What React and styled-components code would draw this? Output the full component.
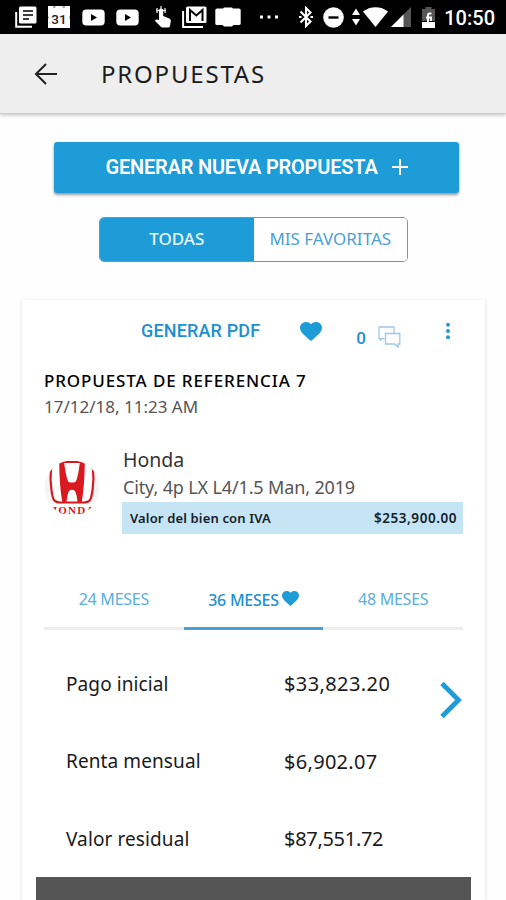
import React from "react";
import styled, { createGlobalStyle } from "styled-components";

const rows = [
  { label: "Pago inicial", value: "$33,823.20", spacing: "0.4px" },
  { label: "Renta mensual", value: "$6,902.07", spacing: "0.3px" },
  { label: "Valor residual", value: "$87,551.72", spacing: "-0.3px" },
];

const Heart = ({ width, height }) => (
  <svg width={width} height={height} viewBox="2 3 20 18.35" preserveAspectRatio="none">
    <path
      fill="#1e9cd8"
      d="M12 21.35l-1.45-1.32C5.4 15.36 2 12.28 2 8.5 2 5.42 4.42 3 7.5 3c1.74 0 3.41.81 4.5 2.09C13.09 3.81 14.76 3 16.5 3 19.58 3 22 5.42 22 8.5c0 3.78-3.4 6.86-8.55 11.54L12 21.35z"
    />
  </svg>
);

const YoutubeIcon = () => (
  <svg width="23" height="17" viewBox="0 0 23 17">
    <rect x="0.3" y="0.5" width="22.4" height="16" rx="4" fill="#fff" />
    <path d="M9 5l6 3.5L9 12z" fill="#000" />
  </svg>
);

const StatusIcons = () => (
  <Notifications>
    <svg width="22" height="22" viewBox="0 0 22 22">
      <path d="M1.2 6v14.8H17" fill="none" stroke="#fff" strokeWidth="2" />
      <rect x="4" y="0.5" width="17.5" height="17" rx="1.5" fill="#fff" />
      <path d="M8 5h10M8 9h10M8 13h6" stroke="#000" strokeWidth="1.7" />
    </svg>
    <svg width="22" height="22" viewBox="0 0 22 22">
      <path d="M0 0h22v10l-.5 1.500.5 1.500v9H0v-9l.5-1.500L0 10z" fill="#fff" />
      <path d="M5 0h2.500v2H5zM14.500 0H17v2h-2.500z" fill="#aaa" />
      <text x="11" y="17.5" textAnchor="middle" fontFamily="Roboto" fontSize="13.5" fontWeight="500" fill="#222">31</text>
    </svg>
    <YoutubeIcon />
    <YoutubeIcon />
    <svg width="18" height="22" viewBox="0 0 18 22">
      <path d="M7 0v5M2 4.500h10M3 2v5M11 2v5" fill="none" stroke="#ddd" strokeWidth="1.300" />
      <path
        d="M5 4.500a2.100 2.100 0 0 1 4.200 0V10l6.100 2.500q1.700.8 1.500 2.500l-.8 5q-.3 1.500-2 1.500H8.500q-1 0-1.700-.8L.8 14.800l1-1q.7-.5 1.500-.2l1.700.7z"
        fill="#fff"
      />
    </svg>
    <svg width="25" height="22" viewBox="0 0 25 22">
      <path d="M1.100 5v15.900H21" fill="none" stroke="#fff" strokeWidth="2" />
      <rect x="4" y="0.500" width="20.500" height="16.500" rx="1.500" fill="#fff" />
      <path d="M8 15V4l6.300 5.500L20.500 4v11" fill="none" stroke="#000" strokeWidth="2" />
    </svg>
    <svg width="26" height="20" viewBox="0 0 26 20">
      <path d="M2 1.500h6L9 .5h8l1 1h6q1.700 0 1.700 1.500v13.500q0 1.500-1.700 1.500h-5.500l-1.500 1.500H9L7.500 18H2Q.3 18 .3 16.500V3Q.3 1.500 2 1.500z" fill="#fff" />
    </svg>
    <svg width="20" height="4" viewBox="0 0 20 4">
      <path d="M1 .5h3v3H1zM8.500 .5h3v3h-3zM16 .5h3v3h-3z" fill="#fff" />
    </svg>
  </Notifications>
);

const SystemIcons = () => (
  <System>
    <svg width="14" height="22" viewBox="0 0 14 22">
      <path d="M1.500 5.500l10 10L7 20V2l4.500 4.500-10 10" fill="none" stroke="#fff" strokeWidth="2.100" />
      <path d="M0 10h2.500v2H0zM11.500 10H14v2h-2.500z" fill="#fff" />
    </svg>
    <svg width="21" height="21" viewBox="0 0 21 21">
      <circle cx="10.500" cy="10.500" r="10.300" fill="#fff" />
      <path d="M5.500 10.500h10" stroke="#000" strokeWidth="2.400" />
    </svg>
    <svg width="8" height="18" viewBox="0 0 8 18">
      <path d="M0 7l4-6.500L8 7zM0 11h8l-4 6.500z" fill="#fff" />
    </svg>
    <svg width="25" height="20" viewBox="0 0 25 20">
      <path d="M12.500 20L0 4.500Q5.500.2 12.500.2T25 4.500z" fill="#fff" />
    </svg>
    <svg width="20" height="20" viewBox="0 0 20 20">
      <path d="M0 20L20 0v20z" fill="#555" />
      <path d="M0 20L12.500 7.500V20z" fill="#fff" />
    </svg>
    <svg width="13" height="21" viewBox="0 0 13 21">
      <path d="M3.500 0h6v2H13v12H0V2h3.500z" fill="#555" />
      <path d="M0 15h13v6H0z" fill="#fff" />
      <path d="M9.500 6.500H7.500q-1.500 0-1.500 1.700V16M4 10.500h5v3.500" fill="none" stroke="#fff" strokeWidth="1.900" />
    </svg>
    <Clock>10:50</Clock>
  </System>
);

const HondaLogo = () => (
  <svg width="56" height="56" viewBox="0 0 56 56">
    <defs>
      <clipPath id="avatar">
        <circle cx="28" cy="28" r="27.500" />
      </clipPath>
    </defs>
    <g clipPath="url(#avatar)">
      <rect width="56" height="56" fill="#f5f5f5" />
      <path d="M0 44h56v12H0z" fill="#fff" />
      <path
        d="M17 2h22q8.500 0 10 7.500 1 9-.3 19-1 9-2.700 11.500-2 2.500-7 2.500H17q-5 0-7-2.500-1.700-2.500-2.700-11.500Q6 18.500 7 9.500 8.500 2 17 2z"
        fill="#fff"
        stroke="#d81920"
        strokeWidth="2.200"
      />
      <path
        d="M15.200 3h5q1.300 10.500 3.300 17 .8 2.500 3 2.500h3q2.200 0 3-2.500 2-6.500 3.300-17h5Q40.500 27 37.700 42h-4.200q-.5-6.500-2-10-1-2.300-3.500-2.300T24.500 32q-1.500 3.500-2 10h-4.200Q15.500 27 15.200 3z"
        fill="#d81920"
      />
      <text x="28" y="54" textAnchor="middle" fontFamily="Liberation Serif, serif" fontSize="11" letterSpacing="1.2" fontWeight="700" fill="#d81920">
        HONDA
      </text>
    </g>
  </svg>
);

const App = () => {
  return (
    <Screen>
      <GlobalStyle />
      <StatusBar>
        <StatusIcons />
        <SystemIcons />
      </StatusBar>
      <Header>
        <svg width="24" height="24" viewBox="0 0 24 24">
          <path d="M23 12H2.500M12 2L2 12l10 10" fill="none" stroke="#222" strokeWidth="2" />
        </svg>
        <Title>PROPUESTAS</Title>
      </Header>
      <NewButton>
        GENERAR NUEVA PROPUESTA
        <svg width="16" height="16" viewBox="0 0 16 16">
          <path d="M8 0v16M0 8h16" stroke="#fff" strokeWidth="2" />
        </svg>
      </NewButton>
      <Segment>
        <SegmentItem $active>TODAS</SegmentItem>
        <SegmentItem>MIS FAVORITAS</SegmentItem>
      </Segment>
      <Card>
        <Actions>
          <PdfLink>GENERAR PDF</PdfLink>
          <Heart width={22} height={19} />
          <Count>0</Count>
          <svg width="23" height="23" viewBox="0 0 23 23">
            <g fill="none" stroke="#9cc8e8" strokeWidth="1.300">
              <path d="M6.500 12.500H4.500L2.500 14v-1.500H1V1h15v6" />
              <path d="M7.500 7.500h14.300V18H20v3l-3.500-3h-9z" />
            </g>
          </svg>
          <svg width="6" height="18" viewBox="0 0 6 18">
            <g fill="#1e9cd8">
              <circle cx="3" cy="2.700" r="2" />
              <circle cx="3" cy="9" r="2" />
              <circle cx="3" cy="15.300" r="2" />
            </g>
          </svg>
        </Actions>
        <Reference>PROPUESTA DE REFERENCIA 7</Reference>
        <DateText>17/12/18, 11:23 AM</DateText>
        <Vehicle>
          <HondaLogo />
          <VehicleInfo>
            <Brand>Honda</Brand>
            <Model>City, 4p LX L4/1.5 Man, 2019</Model>
            <PriceBar>
              <span>Valor del bien con IVA</span>
              <Price>$253,900.00</Price>
            </PriceBar>
          </VehicleInfo>
        </Vehicle>
        <Tabs>
          <Tab>24 MESES</Tab>
          <Tab $active>
            36 MESES
            <Heart width={17} height={15} />
          </Tab>
          <Tab>48 MESES</Tab>
        </Tabs>
        <Details>
          <div>
            {rows.map((row) => (
              <Row key={row.label}>
                <Label>{row.label}</Label>
                <Value $spacing={row.spacing}>{row.value}</Value>
              </Row>
            ))}
          </div>
          <svg width="24" height="38" viewBox="0 0 24 38">
            <path d="M3 2.500L19.500 19 3 35.500" fill="none" stroke="#1e9cd8" strokeWidth="4.800" />
          </svg>
        </Details>
        <Footer />
      </Card>
    </Screen>
  );
};

export default App;

const GlobalStyle = createGlobalStyle`
  * {
    box-sizing: border-box;
  }
  body {
    margin: 0;
    background: #fefefe;
    font-family: "Noto Sans", sans-serif;
  }
  svg {
    display: block;
    flex-shrink: 0;
  }
`;
const Screen = styled.div`
  width: 506px;
  height: 900px;
  overflow: hidden;
  background: #fefefe;
  display: flex;
  flex-direction: column;
`;
const StatusBar = styled.div`
  height: 34px;
  flex-shrink: 0;
  background: #000;
  display: flex;
  justify-content: space-between;
  align-items: center;
  padding: 0 11px 0 15px;
`;
const Notifications = styled.div`
  display: flex;
  align-items: center;
  gap: 11px;
  svg:nth-child(3) {
    margin-left: 1px;
  }
  svg:nth-child(5) {
    margin-left: 4px;
  }
  svg:nth-child(6) {
    margin-left: -1px;
  }
  svg:nth-child(7) {
    margin-left: -3px;
  }
  svg:nth-child(8) {
    margin-left: 7px;
  }
`;
const System = styled.div`
  display: flex;
  align-items: center;
  svg:nth-child(2) {
    margin-left: 10px;
  }
  svg:nth-child(3) {
    margin-left: 8px;
  }
  svg:nth-child(4) {
    margin-left: 3px;
  }
  svg:nth-child(5) {
    margin-left: 3px;
  }
  svg:nth-child(6) {
    margin-left: 11px;
  }
`;
const Clock = styled.span`
  font-family: Roboto, sans-serif;
  font-size: 20px;
  font-weight: 500;
  line-height: 34px;
  color: #fff;
  margin-left: 9px;
  padding-top: 2px;
`;
const Header = styled.div`
  height: 80px;
  flex-shrink: 0;
  background: #eee;
  border-bottom: 1px solid #ccc;
  box-shadow: 0 1px 4px rgba(0, 0, 0, 0.25);
  display: flex;
  align-items: center;
  padding-left: 34px;
`;
const Title = styled.div`
  font-size: 24px;
  letter-spacing: 1.8px;
  color: #1c1c1c;
  margin-left: 43px;
`;
const NewButton = styled.button`
  width: 405px;
  height: 51px;
  flex-shrink: 0;
  margin: 28px auto 0 54px;
  padding: 0 0 2px;
  border: none;
  border-radius: 3px;
  background: #1e9cd8;
  box-shadow: 0 2px 3px rgba(0, 0, 0, 0.4);
  color: #fff;
  font-family: Roboto, sans-serif;
  font-size: 20px;
  font-weight: 600;
  letter-spacing: -0.2px;
  display: flex;
  justify-content: center;
  align-items: center;
  gap: 14px;
`;
const Segment = styled.div`
  width: 309px;
  height: 45px;
  flex-shrink: 0;
  margin: 24px 0 0 99px;
  border: 1px solid #4f9fd8;
  border-radius: 5px;
  overflow: hidden;
  display: flex;
`;
const SegmentItem = styled.div`
  flex: 1;
  display: flex;
  justify-content: center;
  align-items: center;
  padding-bottom: 2px;
  font-size: 17px;
  font-weight: ${({ $active }) => ($active ? 500 : 400)};
  color: ${({ $active }) => ($active ? "#e6f5fd" : "#4a9fd8")};
  background: ${({ $active }) => ($active ? "#1e9cd8" : "#fff")};
`;
const Card = styled.div`
  width: 463px;
  height: 600px;
  flex-shrink: 0;
  margin: 38px 0 0 22px;
  padding: 0 22px;
  background: #fff;
  box-shadow: 0 1px 4px rgba(0, 0, 0, 0.14);
  display: flex;
  flex-direction: column;
`;
const Actions = styled.div`
  height: 62px;
  flex-shrink: 0;
  display: flex;
  align-items: center;
  padding-left: 97px;
  svg:nth-child(2) {
    margin-left: 40px;
  }
  svg:nth-child(4) {
    margin: 13px 0 0 12px;
  }
  svg:nth-child(5) {
    margin-left: 44px;
  }
`;
const PdfLink = styled.a`
  font-family: Roboto, sans-serif;
  font-size: 18px;
  letter-spacing: 0.15px;
  font-weight: 500;
  color: #1e90d2;
  padding-bottom: 2px;
`;
const Count = styled.span`
  width: 10px;
  margin: 13px 0 0 34px;
  font-family: Roboto, sans-serif;
  font-size: 17px;
  font-weight: 500;
  color: #1e90d2;
`;
const Reference = styled.div`
  font-size: 17px;
  font-weight: 500;
  line-height: 26px;
  letter-spacing: 0.88px;
  color: #000;
  margin-top: 6px;
`;
const DateText = styled.div`
  font-size: 17px;
  line-height: 26px;
  color: #555;
`;
const Vehicle = styled.div`
  display: flex;
  align-items: flex-start;
  margin-top: 26px;
  & > svg {
    margin-top: 14px;
  }
`;
const VehicleInfo = styled.div`
  margin-left: 22px;
  width: 341px;
`;
const Brand = styled.div`
  font-size: 19.5px;
  line-height: 28px;
  color: #333;
  padding-left: 1px;
`;
const Model = styled.div`
  font-size: 18px;
  line-height: 27px;
  letter-spacing: -0.14px;
  color: #555;
  padding-left: 1px;
`;
const PriceBar = styled.div`
  height: 32px;
  margin-top: 1px;
  padding: 0 6px 0 8px;
  background: #c5e4f4;
  color: #14202a;
  font-size: 13px;
  font-weight: 600;
  letter-spacing: 0.15px;
  display: flex;
  justify-content: space-between;
  align-items: center;
`;
const Price = styled.span`
  font-size: 13.5px;
  letter-spacing: 0.55px;
`;
const Tabs = styled.div`
  display: flex;
  margin-top: 38px;
`;
const Tab = styled.div`
  flex: 1;
  height: 58px;
  padding-bottom: ${({ $active }) => ($active ? "0" : "2px")};
  border-bottom: 3px solid ${({ $active }) => ($active ? "#4a9fd8" : "#eee")};
  display: flex;
  justify-content: center;
  align-items: center;
  gap: 3px;
  font-size: 16px;
  font-weight: ${({ $active }) => ($active ? 500 : 400)};
  letter-spacing: -0.25px;
  color: ${({ $active }) => ($active ? "#1e90d2" : "#5aaee0")};
  svg {
    margin-top: -3px;
  }
`;
const Details = styled.div`
  display: flex;
  justify-content: space-between;
  padding: 15px 0 0 22px;
  & > svg {
    margin: 36px 0 0 0;
  }
`;
const Row = styled.div`
  height: 77.500px;
  display: flex;
  align-items: center;
  color: #1a1a1a;
`;
const Label = styled.div`
  width: 218px;
  font-size: 19px;
  letter-spacing: 0.1px;
`;
const Value = styled.div`
  font-size: 20px;
  letter-spacing: ${({ $spacing }) => $spacing};
`;
const Footer = styled.div`
  flex: 1;
  min-height: 23px;
  margin: -1px -8px 0;
  background: #555;
`;
